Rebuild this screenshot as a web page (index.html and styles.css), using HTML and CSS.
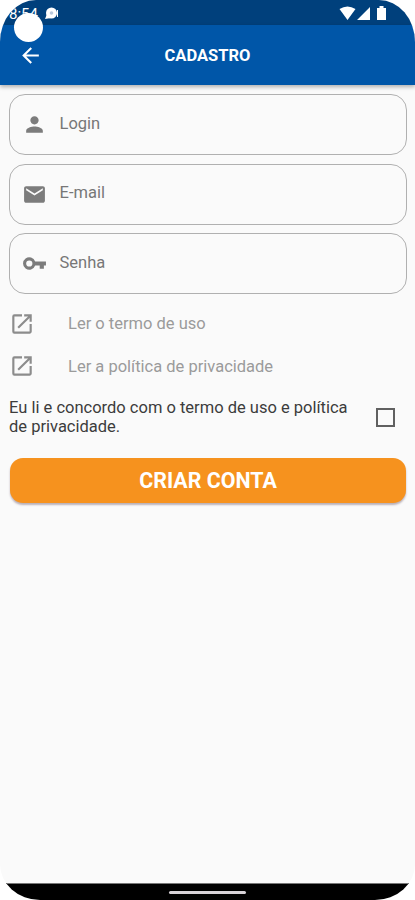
FILE: index.html
```html
<!DOCTYPE html>
<html lang="pt-BR">
<head>
<meta charset="utf-8">
<meta name="viewport" content="width=device-width">
<title>Cadastro</title>
<link rel="stylesheet" href="styles.css">
</head>
<body>
<div class="phone">
  <div class="status">
    <span class="clock">8:54</span>
    <svg class="notice" width="16" height="14" viewBox="0 0 16 14"><circle cx="7.500" cy="6" r="5.500"/><path d="M1 12l2-5 4 4zM13 3h1v7h-1z"/><circle class="hole" cx="7.500" cy="6" r="1.800"/></svg>
    <svg class="signals" width="48" height="16" viewBox="0 0 48 16"><path d="M0.500 4Q8.500-1 16.500 4L8.500 15ZM18 15L31 2V15ZM38 3h2.500V1h4v2H47v12H38Z"/></svg>
  </div>
  <span class="camera"></span>
  <header class="bar">
    <svg class="back" width="25" height="25" viewBox="0 0 24 24"><path d="M20 11H7.830l5.590-5.590L12 4l-8 8 8 8 1.410-1.410L7.830 13H20z"/></svg>
    <h1>CADASTRO</h1>
  </header>
  <main>
    <div class="field">
      <svg width="25" height="25" viewBox="0 0 24 24"><path d="M12 12c2.210 0 4-1.790 4-4s-1.790-4-4-4-4 1.790-4 4 1.790 4 4 4zm0 2c-2.670 0-8 1.340-8 4v2h16v-2c0-2.660-5.330-4-8-4z"/></svg>
      <span>Login</span>
    </div>
    <div class="field">
      <svg width="25" height="25" viewBox="0 0 24 24"><path d="M20 4H4c-1.100 0-2 .9-2 2v12c0 1.100.9 2 2 2h16c1.100 0 2-.9 2-2V6c0-1.100-.9-2-2-2zm0 4l-8 5-8-5V6l8 5 8-5z"/></svg>
      <span>E-mail</span>
    </div>
    <div class="field">
      <svg width="25" height="25" viewBox="0 0 24 24"><path fill-rule="evenodd" d="M12.650 10A6 6 0 1 0 12.650 14H17v3h4v-3h2v-4zM7 15a3 3 0 1 1 0-6 3 3 0 0 1 0 6z"/></svg>
      <span>Senha</span>
    </div>
    <div class="link">
      <svg width="26" height="26" viewBox="0 0 24 24"><path d="M19 19H5V5h7V3H5a2 2 0 0 0-2 2v14a2 2 0 0 0 2 2h14c1.100 0 2-.9 2-2v-7h-2zM14 3v2h3.590l-9.830 9.830 1.410 1.410L19 6.410V10h2V3z"/></svg>
      <span>Ler o termo de uso</span>
    </div>
    <div class="link">
      <svg width="26" height="26" viewBox="0 0 24 24"><path d="M19 19H5V5h7V3H5a2 2 0 0 0-2 2v14a2 2 0 0 0 2 2h14c1.100 0 2-.9 2-2v-7h-2zM14 3v2h3.590l-9.830 9.830 1.410 1.410L19 6.410V10h2V3z"/></svg>
      <span>Ler a política de privacidade</span>
    </div>
    <div class="agree">
      <p>Eu li e concordo com o termo de uso e política<br>de privacidade.</p>
      <span class="check"></span>
    </div>
    <button class="create" type="button">CRIAR CONTA</button>
  </main>
  <div class="nav"><span></span></div>
</div>
</body>
</html>
```
FILE: styles.css
```css
* { box-sizing: border-box; }
body { margin: 0; background: #fff; font-family: Roboto, sans-serif; }
.phone {
  position: relative;
  width: 415px;
  height: 900px;
  overflow: hidden;
  display: flex;
  flex-direction: column;
  background: #fafafa;
  border-radius: 36px 36px 40px 40px / 42px 42px 36px 36px;
}
.status {
  height: 25px;
  flex: none;
  display: flex;
  align-items: flex-start;
  padding: 6px 28px 0 9px;
  background: #00407c;
  color: #fff;
}
.clock { width: 35px; font-size: 15px; line-height: 16px; }
.notice { fill: #fff; margin-top: 1px; }
.notice .hole { fill: #b9c8dc; }
.signals { margin-left: auto; margin-top: -1px; fill: #fff; }
.camera {
  position: absolute;
  z-index: 2;
  left: 14px;
  top: 13px;
  width: 29px;
  height: 29px;
  border-radius: 50%;
  background: #fff;
}
.bar {
  height: 60px;
  flex: none;
  display: grid;
  grid-template-columns: 42px 1fr 42px;
  align-items: center;
  background: #0056a8;
  box-shadow: 0 2px 4px rgba(0, 0, 0, .3);
}
.back { margin-left: 18px; fill: #fff; }
h1 { margin: 0; padding-top: 2px; text-align: center; color: #fff; font-size: 16.500px; font-weight: 700; line-height: 20px; }
main { flex: 1; padding: 9px 8px 0 9px; }
.field {
  height: 61px;
  margin-bottom: 8.500px;
  padding: 0 11px;
  display: grid;
  grid-template-columns: 26px 1fr;
  column-gap: 12.500px;
  align-items: center;
  border: 1px solid #b0b0b0;
  border-radius: 16px;
  color: #777;
  font-size: 16.500px;
  line-height: 20px;
}
.field svg { justify-self: center; fill: #7c7c7c; }
.field span { margin-top: -2px; }
.link {
  height: 42.500px;
  display: flex;
  align-items: center;
  gap: 33px;
  color: #9b9b9b;
  font-size: 16.500px;
}
.link svg { fill: #8c8c8c; }
.agree {
  height: 60px;
  display: flex;
  align-items: center;
  justify-content: space-between;
  padding-right: 12px;
}
.agree p { margin: 0; color: #3c3c3c; font-size: 16.500px; line-height: 18.500px; white-space: nowrap; }
.check { width: 19px; height: 19px; border: 2px solid #606060; }
.create {
  display: block;
  width: 396px;
  height: 45px;
  margin: 10.500px 0 0 1px;
  padding: 0;
  border: 0;
  border-radius: 13px;
  background: #f6921e;
  color: #fff;
  font: 700 21.400px/45px Roboto, sans-serif;
  box-shadow: 0 2px 2px rgba(70, 40, 60, .35);
}
.nav {
  height: 17px;
  flex: none;
  display: flex;
  justify-content: center;
  padding-top: 7px;
  background: #000;
  border-top: 1px solid #777;
}
.nav span { width: 77px; height: 3px; border-radius: 2px; background: #d8d3d8; }
```
